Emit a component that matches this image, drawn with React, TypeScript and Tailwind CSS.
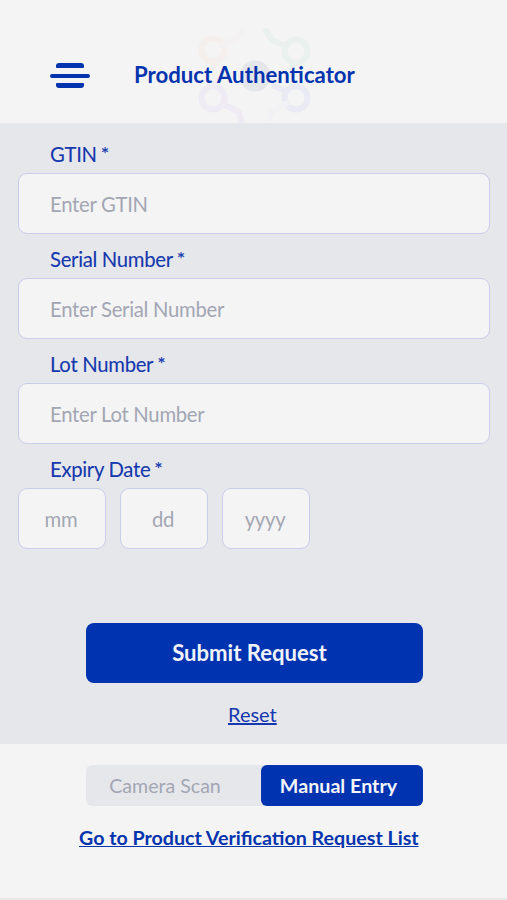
import React, { useState } from "react";

type FieldProps = {
  label: string;
  placeholder: string;
  value: string;
  onChange: (value: string) => void;
};

const emptyForm = { gtin: "", serial: "", lot: "", mm: "", dd: "", yyyy: "" };

const boxClass =
  "h-[61px] rounded-[9px] border border-[#c9cdea] bg-[#f4f4f5] text-[20.3px] tracking-[-0.28px] text-[#1f3fae] outline-none placeholder:text-[#a3a6b3] placeholder:opacity-100";

const Label: React.FC<{ text: string }> = ({ text }) => (
  <label className="flex h-[44px] items-center gap-[5px] pt-[6px] pl-[32px] text-[20.3px] leading-none tracking-[-0.3px] text-[#1438ae] [-webkit-text-stroke:0.1px_#1438ae]">
    {text}
    <span className="-ml-px h-[20px] text-[20px] leading-[19px]">*</span>
  </label>
);

const Field: React.FC<FieldProps> = ({ label, placeholder, value, onChange }) => (
  <div className="flex flex-col">
    <Label text={label} />
    <input
      className={`${boxClass} w-full px-[31px]`}
      placeholder={placeholder}
      value={value}
      onChange={(e) => onChange(e.target.value)}
    />
  </div>
);

const Logo: React.FC = () => (
  <svg
    className="absolute top-[24px] left-[193px] h-[99px] w-[122px]"
    viewBox="193 24 122 99"
    fill="none"
    strokeWidth="6"
    strokeLinecap="round"
  >
    <circle cx="255" cy="76" r="15.5" fill="#e5e6ea" />
    <g stroke="#f4efec">
      <circle cx="213" cy="50" r="11.5" />
      <path d="M213 62v5" />
      <path d="M223 45l14-6 5-8" stroke="#f4f1f2" />
    </g>
    <g stroke="#e9f0ee">
      <circle cx="296" cy="51" r="11.5" />
      <path d="M286 46l-14-6-6-9M296 63l-4 5" />
    </g>
    <g stroke="#eeebf4">
      <circle cx="213" cy="98" r="11.5" />
      <path d="M223 104l16 8 3 12" />
      <path d="M213 86l4-5" stroke="#f2eef3" />
    </g>
    <g stroke="#e9eaf4">
      <circle cx="296" cy="98" r="11.5" />
      <path d="M286 91l-12-5" />
      <path d="M286 104l-14 8-4 11" stroke="#f2f2f5" />
    </g>
  </svg>
);

const App: React.FC = () => {
  const [form, setForm] = useState(emptyForm);
  const [mode, setMode] = useState("manual");

  const update = (key: keyof typeof emptyForm) => (value: string) =>
    setForm({ ...form, [key]: value });

  return (
    <div className="flex h-[900px] w-full flex-col overflow-hidden bg-[#f4f4f4] font-['Lato',sans-serif]">
      <header className="relative flex h-[123px] shrink-0 items-center pt-[27px] pl-[50px]">
        <Logo />
        <button className="relative flex w-10 flex-col items-center" aria-label="Menu">
          <span className="h-[5px] w-[28px] rounded-t-[3px] rounded-b-[1px] bg-[#0433ae]" />
          <span className="mt-[6px] h-[4px] w-[40px] rounded-full bg-[#0433ae]" />
          <span className="mt-[5px] h-[5px] w-[28px] rounded-t-[1px] rounded-b-[3px] bg-[#0433ae]" />
        </button>
        <h1 className="relative ml-[44px] text-[22.2px] leading-none font-bold whitespace-nowrap text-[#0433ae]">
          Product Authenticator
        </h1>
      </header>

      <main className="flex h-[621px] shrink-0 flex-col bg-[#e6e7eb] pt-[6px] pr-[17px] pl-[18px]">
        <Field label="GTIN" placeholder="Enter GTIN" value={form.gtin} onChange={update("gtin")} />
        <Field
          label="Serial Number"
          placeholder="Enter Serial Number"
          value={form.serial}
          onChange={update("serial")}
        />
        <Field
          label="Lot Number"
          placeholder="Enter Lot Number"
          value={form.lot}
          onChange={update("lot")}
        />
        <Label text="Expiry Date" />
        <div className="flex gap-[14px]">
          {(["mm", "dd", "yyyy"] as const).map((part) => (
            <input
              key={part}
              className={`${boxClass} w-[88px] pt-px pr-[10px] pl-[8px] text-center`}
              placeholder={part}
              value={form[part]}
              onChange={(e) => update(part)(e.target.value)}
            />
          ))}
        </div>

        <button className="mt-[74px] ml-[68px] h-[60px] w-[337px] rounded-lg bg-[#0033b0] pr-[10px] text-[22.1px] font-bold text-[#f1f3fb]">
          Submit Request
        </button>
        <button
          className="mt-[19px] ml-[210px] w-fit text-[20px] leading-6 text-[#1438ae] underline"
          onClick={() => setForm(emptyForm)}
        >
          Reset
        </button>
      </main>

      <footer className="flex flex-1 flex-col border-b-2 border-[#e8e8e8] pt-[21px]">
        <div className="ml-[86px] flex h-[41px] w-[337px] rounded-md bg-[#e6e7eb]">
          <button
            className="w-[175px] pr-[17px] text-[19.6px] text-[#a3a6b3]"
            onClick={() => setMode("camera")}
          >
            Camera Scan
          </button>
          <button
            className="flex-1 rounded-md bg-[#0033b0] pr-[7px] text-[19.7px] font-bold text-[#f4f5fb]"
            aria-pressed={mode === "manual"}
            onClick={() => setMode("manual")}
          >
            Manual Entry
          </button>
        </div>
        <a
          href="#"
          className="mt-[20px] ml-[79px] w-fit text-[19.65px] leading-6 font-bold whitespace-nowrap text-[#0433ae] underline"
        >
          Go to Product Verification Request List
        </a>
      </footer>
    </div>
  );
};

export default App;
